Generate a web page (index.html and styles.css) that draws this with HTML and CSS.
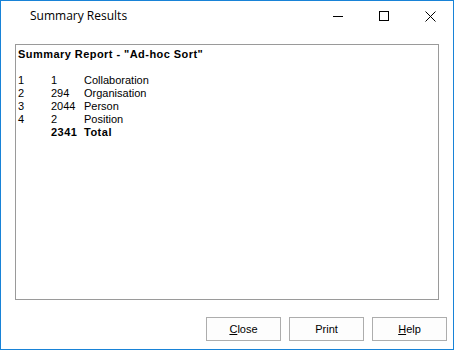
FILE: index.html
```html
<!DOCTYPE html>
<html>
<head>
<meta charset="utf-8">
<link rel="stylesheet" href="styles.css">
</head>
<body>
<div class="window">
  <div class="titlebar">
    <div class="title">Summary Results</div>
    <div class="caption">
      <div class="cbtn"><svg width="10" height="10" viewBox="0 0 10 10"><path d="M0 5.5H10" stroke="#000" stroke-width="1"/></svg></div>
      <div class="cbtn"><svg width="10" height="10" viewBox="0 0 10 10"><rect x="0.5" y="0.5" width="9" height="9" fill="none" stroke="#000" stroke-width="1"/></svg></div>
      <div class="cbtn"><svg width="11" height="11" viewBox="0 0 11 11"><path d="M0.5 0.5L10.5 10.5M10.5 0.5L0.5 10.5" stroke="#000" stroke-width="1"/></svg></div>
    </div>
  </div>
  <div class="content">
    <div class="report">
      <div class="rtitle">Summary Report - "Ad-hoc Sort"</div>
      <div class="blank"></div>
      <div class="row"><span>1</span><span>1</span><span>Collaboration</span></div>
      <div class="row"><span>2</span><span>294</span><span>Organisation</span></div>
      <div class="row"><span>3</span><span>2044</span><span>Person</span></div>
      <div class="row"><span>4</span><span>2</span><span>Position</span></div>
      <div class="row total"><span></span><span>2341</span><span>Total</span></div>
    </div>
    <div class="buttons">
      <button class="btn"><u>C</u>lose</button>
      <button class="btn">Print</button>
      <button class="btn"><u>H</u>elp</button>
    </div>
  </div>
</div>
</body>
</html>
```
FILE: styles.css
```css
html, body {
  margin: 0;
  padding: 0;
  background: #fff;
}
.window {
  width: 454px;
  height: 350px;
  box-sizing: border-box;
  border: 1px solid #1883d7;
  background: #fff;
  display: flex;
  flex-direction: column;
}
.titlebar {
  height: 30px;
  display: flex;
  align-items: center;
}
.title {
  flex: 1;
  padding-left: 29px;
  font-family: "Open Sans", "Noto Sans", sans-serif;
  font-size: 12px;
  color: #000;
  padding-bottom: 1px;
}
.caption {
  display: flex;
  height: 30px;
}
.cbtn {
  width: 46px;
  height: 30px;
  display: flex;
  align-items: center;
  justify-content: center;
}
.cbtn svg {
  display: block;
}
.content {
  flex: 1;
  display: flex;
  flex-direction: column;
  padding: 13px 6px 8px 14px;
}
.report {
  width: 424px;
  height: 256px;
  box-sizing: border-box;
  border: 1px solid #9a9a9a;
  padding: 3px 2px 2px;
  font-family: "Liberation Sans", Arial, sans-serif;
  font-size: 11px;
  line-height: 13px;
  color: #000;
}
.rtitle {
  font-weight: bold;
  letter-spacing: 0.45px;
}
.blank {
  height: 13px;
}
.row {
  display: grid;
  grid-template-columns: 33px 33px auto;
}
.total {
  font-weight: bold;
  letter-spacing: 0.5px;
}
.buttons {
  margin-top: auto;
  display: flex;
  justify-content: flex-end;
  gap: 8px;
}
.btn {
  width: 75px;
  height: 24px;
  box-sizing: border-box;
  border: 1px solid #adadad;
  background: #fdfdfd;
  font-family: "Liberation Sans", Arial, sans-serif;
  font-size: 11px;
  color: #000;
  padding: 0;
  margin: 0;
}
```
